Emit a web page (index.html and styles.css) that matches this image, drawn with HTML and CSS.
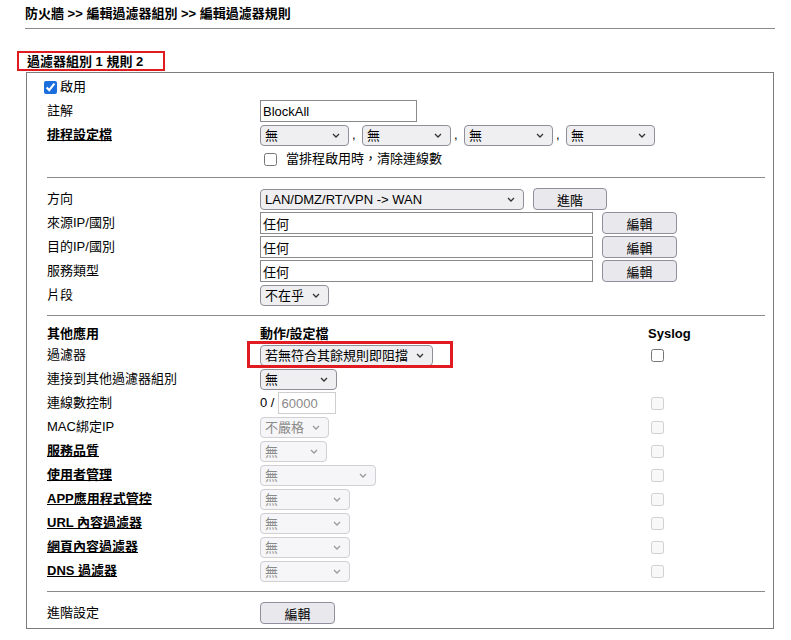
FILE: index.html
```html
<!DOCTYPE html>
<html lang="zh-Hant">
<head>
<meta charset="utf-8">
<title>編輯過濾器規則</title>
<link rel="stylesheet" href="styles.css">
</head>
<body>
<div class="page">
  <div class="crumb">防火牆 &gt;&gt; 編輯過濾器組別 &gt;&gt; 編輯過濾器規則</div>
  <div class="rule-head"><span class="title mark">過濾器組別 1 規則 2</span></div>
  <div class="box">
    <div class="row">
      <label class="chk-label enable"><input type="checkbox" class="chk" checked>啟用</label>
    </div>
    <div class="row">
      <span class="lbl">註解</span>
      <div class="ctl"><input type="text" class="txt w-note" value="BlockAll"></div>
    </div>
    <div class="row">
      <a class="lbl link">排程設定檔</a>
      <div class="ctl sched">
        <select class="sel w-sched"><option>無</option></select><span class="comma">,</span>
        <select class="sel w-sched"><option>無</option></select><span class="comma">,</span>
        <select class="sel w-sched"><option>無</option></select><span class="comma">,</span>
        <select class="sel w-sched"><option>無</option></select>
      </div>
    </div>
    <div class="row">
      <span class="lbl"></span>
      <label class="ctl chk-label clear"><input type="checkbox" class="chk">當排程啟用時，清除連線數</label>
    </div>

    <div class="sep first"></div>

    <div class="row">
      <span class="lbl">方向</span>
      <div class="ctl"><select class="sel w-dir"><option>LAN/DMZ/RT/VPN -&gt; WAN</option></select><button class="btn w-adv">進階</button></div>
    </div>
    <div class="row">
      <span class="lbl">來源IP/國別</span>
      <div class="ctl"><input type="text" class="txt w-addr" value="任何"><button class="btn w-edit">編輯</button></div>
    </div>
    <div class="row">
      <span class="lbl">目的IP/國別</span>
      <div class="ctl"><input type="text" class="txt w-addr" value="任何"><button class="btn w-edit">編輯</button></div>
    </div>
    <div class="row">
      <span class="lbl">服務類型</span>
      <div class="ctl"><input type="text" class="txt w-addr" value="任何"><button class="btn w-edit">編輯</button></div>
    </div>
    <div class="row">
      <span class="lbl">片段</span>
      <div class="ctl"><select class="sel w-frag"><option>不在乎</option></select></div>
    </div>

    <div class="sep"></div>

    <div class="row head">
      <span class="lbl bold">其他應用</span>
      <span class="ctl bold">動作/設定檔</span>
      <span class="bold">Syslog</span>
    </div>
    <div class="row">
      <span class="lbl">過濾器</span>
      <div class="ctl"><span class="mark-sel"><select class="sel w-filter"><option>若無符合其餘規則即阻擋</option></select></span></div>
      <input type="checkbox" class="chk syslog">
    </div>
    <div class="row">
      <span class="lbl">連接到其他過濾器組別</span>
      <div class="ctl"><select class="sel w-link"><option>無</option></select></div>
    </div>
    <div class="row">
      <span class="lbl">連線數控制</span>
      <div class="ctl"><span class="count">0 /</span><input type="text" class="txt w-count" placeholder="60000" disabled></div>
      <input type="checkbox" class="chk syslog" disabled>
    </div>
    <div class="row">
      <span class="lbl">MAC綁定IP</span>
      <div class="ctl"><select class="sel w-mac" disabled><option>不嚴格</option></select></div>
      <input type="checkbox" class="chk syslog" disabled>
    </div>
    <div class="row">
      <a class="lbl link">服務品質</a>
      <div class="ctl"><select class="sel w-qos" disabled><option>無</option></select></div>
      <input type="checkbox" class="chk syslog" disabled>
    </div>
    <div class="row">
      <a class="lbl link">使用者管理</a>
      <div class="ctl"><select class="sel w-user" disabled><option>無</option></select></div>
      <input type="checkbox" class="chk syslog" disabled>
    </div>
    <div class="row">
      <a class="lbl link">APP應用程式管控</a>
      <div class="ctl"><select class="sel w-app" disabled><option>無</option></select></div>
      <input type="checkbox" class="chk syslog" disabled>
    </div>
    <div class="row">
      <a class="lbl link">URL 內容過濾器</a>
      <div class="ctl"><select class="sel w-app" disabled><option>無</option></select></div>
      <input type="checkbox" class="chk syslog" disabled>
    </div>
    <div class="row">
      <a class="lbl link">網頁內容過濾器</a>
      <div class="ctl"><select class="sel w-app" disabled><option>無</option></select></div>
      <input type="checkbox" class="chk syslog" disabled>
    </div>
    <div class="row">
      <a class="lbl link">DNS 過濾器</a>
      <div class="ctl"><select class="sel w-app" disabled><option>無</option></select></div>
      <input type="checkbox" class="chk syslog" disabled>
    </div>

    <div class="sep"></div>

    <div class="row">
      <span class="lbl">進階設定</span>
      <div class="ctl"><button class="btn w-edit">編輯</button></div>
    </div>
  </div>
</div>
</body>
</html>
```

FILE: styles.css
```css
html, body {
  margin: 0;
  padding: 0;
  background: #ffffff;
}

body {
  font-family: "Liberation Sans", "Noto Sans CJK TC", sans-serif;
  font-size: 13px;
  line-height: 16px;
  color: #000000;
}

.page {
  width: 750px;
  padding-left: 25px;
}

.crumb {
  margin-top: 6px;
  padding-bottom: 6px;
  font-weight: bold;
  border-bottom: 1px solid #8a8a8a;
}

.rule-head {
  margin-top: 25px;
  padding-left: 2px;
}

.title {
  font-weight: bold;
  display: inline-block;
}

.mark {
  position: relative;
}

.mark::after {
  content: "";
  position: absolute;
  left: -10px;
  top: -3px;
  right: -22px;
  bottom: -1px;
  border: 2.5px solid #e11b22;
}

.box {
  margin: 2px 1px 0 1px;
  border: 1px solid #7c7c7c;
  padding: 2px 8px 3px 20px;
}

.row {
  display: grid;
  grid-template-columns: 213px 388px auto;
  align-items: center;
  height: 24px;
}

.row.head {
  height: 18px;
}

.lbl {
  color: #000000;
}

.link {
  font-weight: bold;
  text-decoration: underline;
}

.bold {
  font-weight: bold;
}

.ctl {
  display: flex;
  align-items: center;
  white-space: nowrap;
  min-width: 0;
}

.ctl > * {
  flex-shrink: 0;
}

.sep {
  border-top: 1px solid #8a8a8a;
  margin: 8px 0 9px 0;
}

.sep.first {
  margin: 6px 0 9px 0;
}

/* checkboxes */
.chk {
  width: 13px;
  height: 13px;
  margin: 0;
  accent-color: #1a6fdd;
}

.chk-label {
  display: flex;
  align-items: center;
}

.enable {
  margin-left: -3px;
  grid-column: 1 / span 2;
}

.enable .chk {
  margin-right: 3px;
}

.clear .chk {
  margin-left: 4px;
  margin-right: 9px;
}

.syslog {
  margin-left: 3px;
}

/* text inputs */
.txt {
  box-sizing: border-box;
  height: 22px;
  margin: 0;
  padding: 0 2px;
  font-family: "Liberation Sans", "Noto Sans CJK TC", sans-serif;
  font-size: 13px;
  color: #000000;
  background: #ffffff;
  border: 1px solid #8a8a8a;
  border-radius: 0;
}

.txt:disabled {
  border-color: #cfcfcf;
  background: #ffffff;
}

.txt::placeholder {
  color: #8a8a8a;
}

.w-note { width: 157px; }
.w-addr { width: 333px; }
.w-count { width: 58px; }

.count {
  margin-right: 4px;
}

/* selects */
.sel {
  -webkit-appearance: none;
  appearance: none;
  box-sizing: border-box;
  height: 21px;
  margin: 0;
  padding: 0 18px 0 4px;
  font-family: "Liberation Sans", "Noto Sans CJK TC", sans-serif;
  font-size: 13px;
  color: #000000;
  background-color: #efeff2;
  background-image: url("data:image/svg+xml;utf8,<svg xmlns='http://www.w3.org/2000/svg' width='8' height='5' viewBox='0 0 8 5'><path d='M1 1 L4 4 L7 1' fill='none' stroke='%23333' stroke-width='1.3'/></svg>");
  background-repeat: no-repeat;
  background-position: right 8px center;
  border: 1px solid #8f8f9a;
  border-radius: 4px;
}

.sel:disabled {
  color: #8a8a8a;
  background-color: #f6f6f8;
  background-image: url("data:image/svg+xml;utf8,<svg xmlns='http://www.w3.org/2000/svg' width='8' height='5' viewBox='0 0 8 5'><path d='M1 1 L4 4 L7 1' fill='none' stroke='%23999' stroke-width='1.3'/></svg>");
  border-color: #cfcfd4;
  opacity: 1;
}

.w-sched { width: 89px; }
.w-dir { width: 264px; }
.w-frag { width: 69px; }
.w-filter { width: 173px; }
.w-link { width: 77px; }
.w-mac { width: 69px; }
.w-qos { width: 67px; }
.w-user { width: 116px; }
.w-app { width: 90px; }

.comma {
  width: 13px;
  padding-left: 3px;
  box-sizing: border-box;
}

.mark-sel {
  position: relative;
  display: inline-flex;
}

.mark-sel::after {
  content: "";
  position: absolute;
  left: -13px;
  top: -4px;
  right: -20px;
  bottom: -2px;
  border: 3px solid #e11b22;
}

/* buttons */
.btn {
  box-sizing: border-box;
  height: 22px;
  margin: 0 0 0 9px;
  padding: 0;
  font-family: "Liberation Sans", "Noto Sans CJK TC", sans-serif;
  font-size: 13px;
  color: #000000;
  background: #e9e9ed;
  border: 1px solid #8f8f9d;
  border-radius: 4px;
}

.w-adv { width: 74px; }
.w-edit { width: 75px; }

.row .ctl > .btn:first-child {
  margin-left: 0;
}
```
